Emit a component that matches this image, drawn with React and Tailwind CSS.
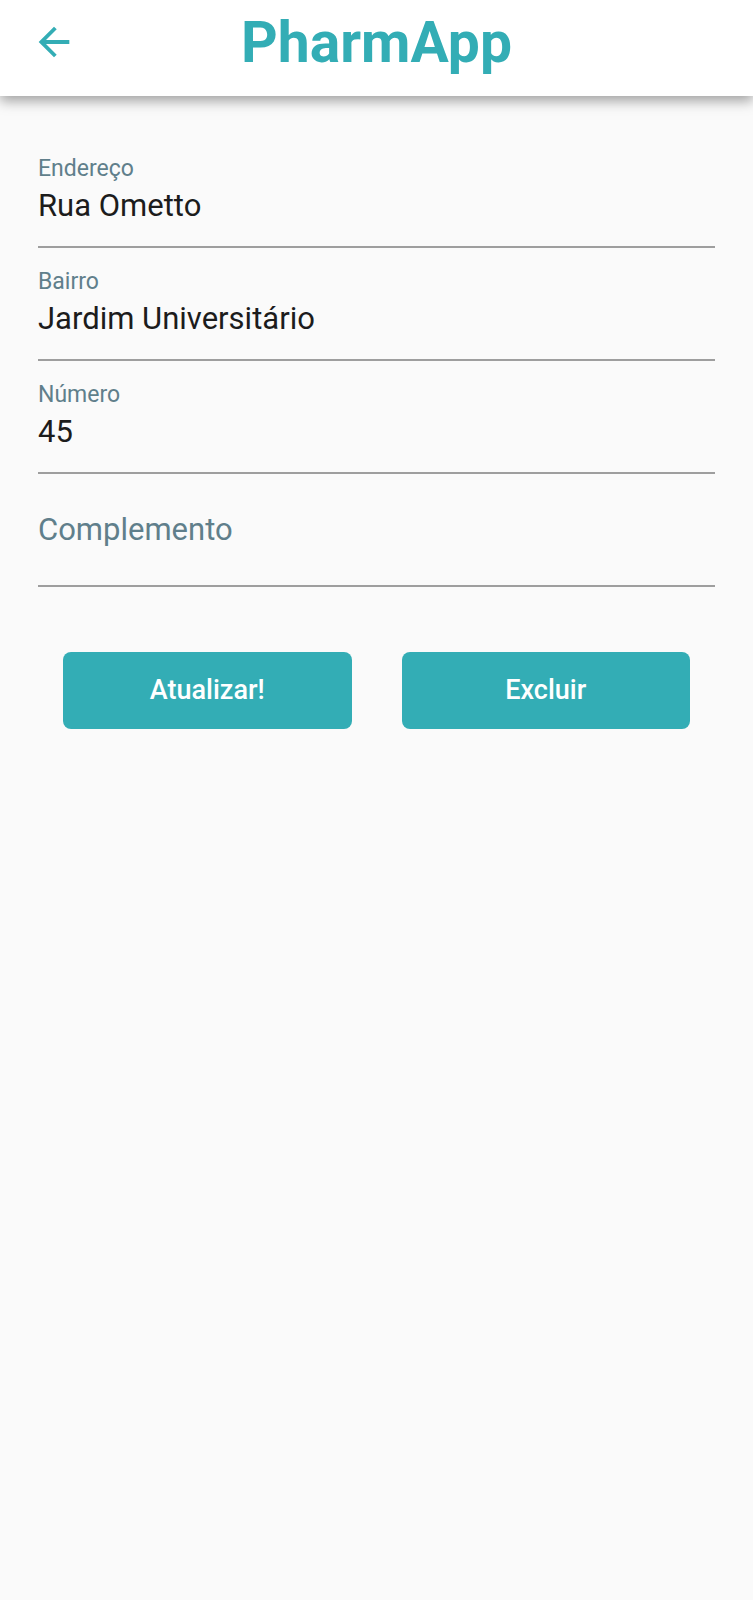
import { MdArrowBack } from "react-icons/md";

const fields = [
  { id: "endereco", label: "Endereço", value: "Rua Ometto" },
  { id: "bairro", label: "Bairro", value: "Jardim Universitário" },
  { id: "numero", label: "Número", value: "45" },
  { id: "complemento", label: "Complemento", value: "" },
];

function Field({ id, label, value }) {
  return (
    <div className="grid border-b-2 border-[#9e9e9e] pt-[19px] pb-4">
      <input
        id={id}
        type="text"
        defaultValue={value}
        placeholder=" "
        className="peer col-start-1 row-start-1 h-[76px] w-full bg-transparent pt-7 pb-0.5 text-[31px] text-[#1c1c1c] outline-none"
      />
      <label
        htmlFor={id}
        className="pointer-events-none col-start-1 row-start-1 self-start text-[23px] leading-[30px] text-[#607f8b] peer-[:placeholder-shown:not(:focus)]:text-[31px] peer-[:placeholder-shown:not(:focus)]:leading-[74px]"
      >
        {label}
      </label>
    </div>
  );
}

function ActionButton({ type, children }) {
  return (
    <button
      type={type}
      className="h-[77px] flex-1 rounded-lg bg-[#33adb5] text-[27px] font-medium text-white"
    >
      {children}
    </button>
  );
}

export default function App() {
  return (
    <div className="min-h-screen bg-[#fafafa] font-['Roboto','Liberation_Sans',sans-serif]">
      <header className="grid h-24 grid-cols-[1fr_auto_1fr] items-center bg-white px-[31px] pb-3 text-[#33adb5] shadow-[0_5px_12px_rgba(0,0,0,0.36)]">
        <button type="button" aria-label="Voltar" className="justify-self-start">
          <MdArrowBack className="size-[46px]" />
        </button>
        <h1 className="text-[57px] leading-[69px] font-bold">PharmApp</h1>
      </header>
      <form className="px-[38px] pt-[39px]">
        {fields.map((field) => (
          <Field key={field.id} {...field} />
        ))}
        <div className="mt-[65px] flex gap-[50px] px-[25px]">
          <ActionButton type="submit">Atualizar!</ActionButton>
          <ActionButton type="button">Excluir</ActionButton>
        </div>
      </form>
    </div>
  );
}
